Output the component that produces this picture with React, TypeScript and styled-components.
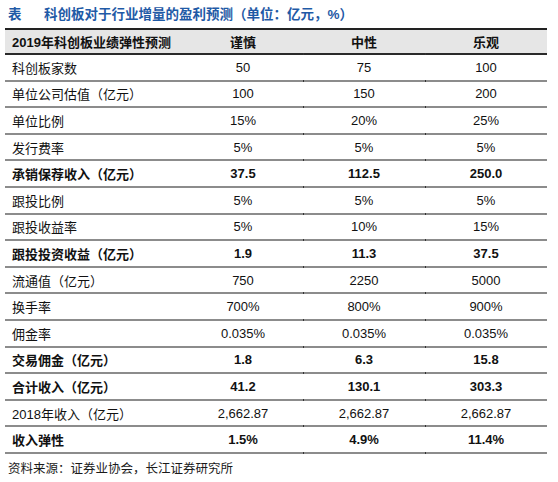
import React from 'react';
import styled, { createGlobalStyle } from 'styled-components';

const GlobalStyle = createGlobalStyle`
  body {
    margin: 0;
    background: #ffffff;
    font-family: "Liberation Sans", "Noto Sans CJK SC", sans-serif;
    color: #111111;
  }
`;

interface IRow {
  label: string;
  values: [string, string, string];
  bold?: boolean;
}

const rows: IRow[] = [
  { label: '科创板家数', values: ['50', '75', '100'] },
  { label: '单位公司估值（亿元）', values: ['100', '150', '200'] },
  { label: '单位比例', values: ['15%', '20%', '25%'] },
  { label: '发行费率', values: ['5%', '5%', '5%'] },
  { label: '承销保荐收入（亿元）', values: ['37.5', '112.5', '250.0'], bold: true },
  { label: '跟投比例', values: ['5%', '5%', '5%'] },
  { label: '跟投收益率', values: ['5%', '10%', '15%'] },
  { label: '跟投投资收益（亿元）', values: ['1.9', '11.3', '37.5'], bold: true },
  { label: '流通值（亿元）', values: ['750', '2250', '5000'] },
  { label: '换手率', values: ['700%', '800%', '900%'] },
  { label: '佣金率', values: ['0.035%', '0.035%', '0.035%'] },
  { label: '交易佣金（亿元）', values: ['1.8', '6.3', '15.8'], bold: true },
  { label: '合计收入（亿元）', values: ['41.2', '130.1', '303.3'], bold: true },
  { label: '2018年收入（亿元）', values: ['2,662.87', '2,662.87', '2,662.87'] },
  { label: '收入弹性', values: ['1.5%', '4.9%', '11.4%'], bold: true },
];

const App: React.FC = () => {
  return (
    <Page>
      <GlobalStyle />
      <Title>
        <TitleTag>表</TitleTag>
        <span>科创板对于行业增量的盈利预测（单位：亿元，%）</span>
      </Title>
      <Table>
        <HeaderRow>
          <LabelCell bold>2019年科创板业绩弹性预测</LabelCell>
          <ValueCell bold>谨慎</ValueCell>
          <ValueCell bold>中性</ValueCell>
          <ValueCell bold>乐观</ValueCell>
        </HeaderRow>
        {rows.map((row) => (
          <Row key={row.label}>
            <LabelCell bold={row.bold}>{row.label}</LabelCell>
            {row.values.map((v, i) => (
              <ValueCell key={i} bold={row.bold}>
                {v}
              </ValueCell>
            ))}
          </Row>
        ))}
      </Table>
      <Source>资料来源：证券业协会，长江证券研究所</Source>
    </Page>
  );
};

const Page = styled.div`
  width: 558px;
  height: 482px;
  padding: 4px 0 0 5px;
  box-sizing: border-box;
`;

const Title = styled.div`
  display: flex;
  align-items: center;
  height: 18px;
  padding-left: 3px;
  color: #1f5aa6;
  font-size: 13.5px;
  font-weight: 700;
  margin-bottom: 6px;
`;

const TitleTag = styled.span`
  width: 36px;
`;

const Table = styled.div`
  width: 542px;
  border-top: 2px solid #222222;
`;

const Row = styled.div`
  display: grid;
  grid-template-columns: 178px 120px 122px 122px;
  align-items: center;
  height: 26.6px;
  box-sizing: border-box;
  border-bottom: 2px solid #8c8c8c;
  position: relative;

  &::before,
  &::after {
    content: '';
    position: absolute;
    bottom: -2px;
    width: 1px;
    height: 2px;
    background: #333333;
  }
  &::before {
    left: 298px;
  }
  &::after {
    left: 420px;
  }
`;

const HeaderRow = styled(Row)`
  height: 25px;
  background: #e6e6e6;
  border-bottom: 2px solid #2a2a2a;
`;

const LabelCell = styled.div<{ bold?: boolean }>`
  padding-left: 7px;
  font-size: 13px;
  font-weight: ${(p) => (p.bold ? 700 : 400)};
  white-space: nowrap;
`;

const ValueCell = styled.div<{ bold?: boolean }>`
  text-align: center;
  font-size: 13px;
  font-weight: ${(p) => (p.bold ? 700 : 400)};
`;

const Source = styled.div`
  margin-top: 4px;
  padding-left: 3px;
  font-size: 12.5px;
  color: #1a1a1a;
`;

export default App;
